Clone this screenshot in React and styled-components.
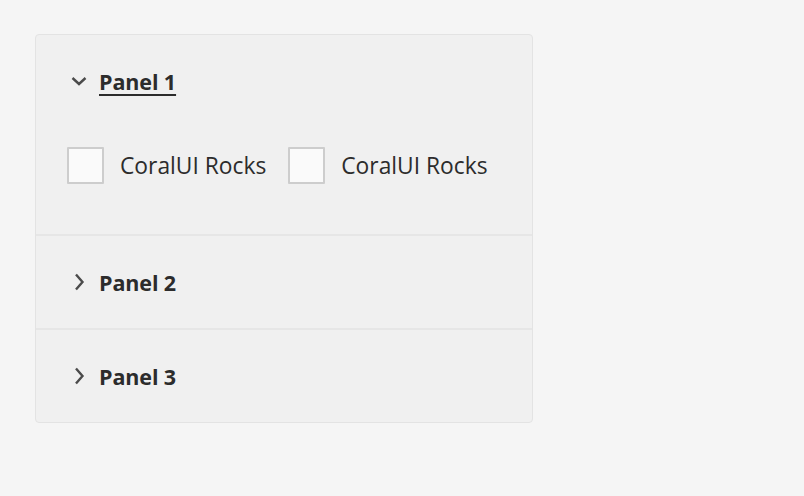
import React from "react";
import styled, { createGlobalStyle } from "styled-components";

const Global = createGlobalStyle`
  html, body { margin: 0; padding: 0; background: #f5f5f5; }
  body { font-family: "Open Sans", "Noto Sans", sans-serif; color: #2c2c2c; }
`;

const Page = styled.div`
  padding: 34px 0 0 35px;
`;

const Accordion = styled.div`
  width: 496px;
  background: #f0f0f0;
  border: 1px solid #e3e3e3;
  border-radius: 4px;
  overflow: hidden;
`;

const Item = styled.div`
  & + & { border-top: 2px solid #e6e6e6; }
`;

const Header = styled.div`
  height: 92px;
  display: flex;
  align-items: center;
  padding-left: 34px;
  gap: 11px;
`;

const IconBox = styled.span`
  width: 18px;
  height: 18px;
  display: flex;
  align-items: center;
  justify-content: center;
  color: #4b4b4b;
`;

const Title = styled.span`
  font-size: 21.5px;
  font-weight: 700;
  letter-spacing: -0.1px;
  text-decoration: ${(p) => (p.$active ? "underline" : "none")};
  text-decoration-thickness: 2px;
  text-underline-offset: 4px;
`;

const Content = styled.div`
  display: flex;
  align-items: center;
  padding: 20px 0 50px 31px;
  gap: 22px;
`;

const CheckLabel = styled.label`
  display: flex;
  align-items: center;
  gap: 16px;
  font-size: 22.8px;
  font-weight: 400;
`;

const Box = styled.span`
  width: 33px;
  height: 33px;
  border: 2px solid #cdcdcd;
  background: #fafafa;
  border-radius: 1px;
`;

const ChevronDown = () => (
  <svg width="18" height="18" viewBox="0 0 18 18">
    <path d="M2.5 6 L9 12 L15.5 6" fill="none" stroke="currentColor" strokeWidth="2.4" />
  </svg>
);

const ChevronRight = () => (
  <svg width="18" height="18" viewBox="0 0 18 18">
    <path d="M6 1.5 L12.5 9 L6 16.5" fill="none" stroke="currentColor" strokeWidth="2.4" />
  </svg>
);

export default function App() {
  return (
    <Page>
      <Global />
      <Accordion>
        <Item>
          <Header>
            <IconBox><ChevronDown /></IconBox>
            <Title $active>Panel 1</Title>
          </Header>
          <Content>
            <CheckLabel><Box />CoralUI Rocks</CheckLabel>
            <CheckLabel><Box />CoralUI Rocks</CheckLabel>
          </Content>
        </Item>
        <Item>
          <Header>
            <IconBox><ChevronRight /></IconBox>
            <Title>Panel 2</Title>
          </Header>
        </Item>
        <Item>
          <Header>
            <IconBox><ChevronRight /></IconBox>
            <Title>Panel 3</Title>
          </Header>
        </Item>
      </Accordion>
    </Page>
  );
}
